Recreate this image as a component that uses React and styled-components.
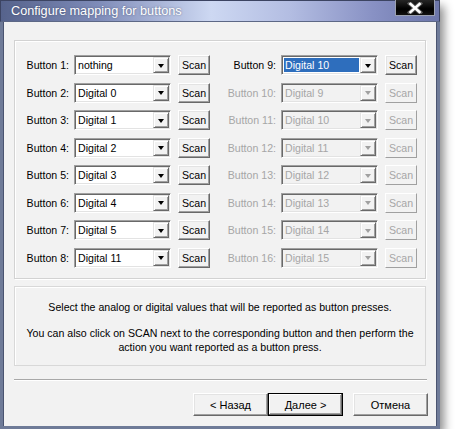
import React from "react";
import styled, { createGlobalStyle, css } from "styled-components";

const GlobalStyle = createGlobalStyle`
  * { box-sizing: border-box; }
  body {
    margin: 0;
    background: #ffffff;
    font-family: "Liberation Sans", Arial, sans-serif;
    font-size: 10.6px;
    color: #000;
  }
`;

const FACE = "#f2f2f2";

const Window = styled.div`
  width: 440px;
  display: flex;
  flex-direction: column;
  box-shadow: 4px 6px 9px rgba(0, 0, 0, 0.45);
`;

const TitleBar = styled.div`
  height: 22px;
  display: flex;
  align-items: flex-start;
  padding: 0 4px 0 10px;
  background: linear-gradient(
    90deg,
    #56638c 0%,
    #7e8bb8 22%,
    #cdd8f2 48%,
    #b3bde2 66%,
    #8891c4 85%,
    #6c76aa 100%
  );
  border-top: 1px solid #3c4462;
  border-left: 1px solid #3c4462;
  border-right: 1px solid #3c4462;
  border-bottom: 1px solid #5d6886;
`;

const Title = styled.span`
  color: #fff;
  font-size: 12.7px;
  line-height: 20px;
  text-shadow: 0 0 2px rgba(40, 50, 80, 0.6);
`;

const CloseButton = styled.div`
  margin-left: auto;
  margin-top: -1px;
  width: 40px;
  height: 16px;
  display: flex;
  align-items: center;
  justify-content: center;
  background: linear-gradient(#262626, #000 60%, #111);
  border: 1px solid #9aa0b0;
  border-top: none;
`;

const Body = styled.div`
  background: ${FACE};
  border: 3px solid #6f7b98;
  border-top: none;
  box-shadow: inset 1px 0 0 #4a5470, inset -1px 0 0 #4a5470;
  padding: 18px 11px 10px 11px;
  display: flex;
  flex-direction: column;
`;

const GroupBox = styled.div`
  height: 239px;
  border: 1px solid #d2d2d2;
  box-shadow: inset 1px 1px 0 #fff, 1px 1px 0 #fff;
  padding: 14px 0 0 0;
  display: grid;
  grid-template-columns: 195px 1fr;
  column-gap: 2px;
  align-content: start;
`;

const Column = styled.div`
  display: flex;
  flex-direction: column;
  gap: 7.5px;
`;

const Row = styled.div`
  display: grid;
  grid-template-columns: ${(p) => p.$labelWidth}px 104px 32px;
  height: 20px;
  align-items: center;
`;

const Label = styled.span`
  text-align: right;
  padding-right: 5px;
  white-space: nowrap;
  color: ${(p) => (p.$disabled ? "#a6a6a6" : "#000")};
`;

const ComboBox = styled.div`
  height: 20px;
  width: 97px;
  display: flex;
  padding: 1px;
  border: 1px solid;
  border-color: #a0a0a0 #ffffff #ffffff #a0a0a0;
  box-shadow: inset 1px 1px 0 #696969, inset -1px -1px 0 #e3e3e3;
  background: ${(p) => (p.$disabled ? FACE : "#fff")};
`;

const ComboText = styled.span`
  flex: 1;
  margin: 1px;
  padding-left: 1px;
  line-height: 14px;
  white-space: nowrap;
  color: ${(p) => (p.$disabled ? "#a6a6a6" : "#000")};
  ${(p) =>
    p.$selected &&
    css`
      background: #2e6ebd;
      color: #fff;
    `}
`;

const ArrowButton = styled.div`
  width: 16px;
  height: 16px;
  display: flex;
  align-items: center;
  justify-content: center;
  background: ${FACE};
  border: 1px solid;
  border-color: #e3e3e3 #696969 #696969 #e3e3e3;
  box-shadow: inset 1px 1px 0 #fff, inset -1px -1px 0 #a0a0a0;
`;

const Triangle = styled.span`
  width: 0;
  height: 0;
  margin-top: 1px;
  border-left: 3.5px solid transparent;
  border-right: 3.5px solid transparent;
  border-top: 4px solid ${(p) => (p.$disabled ? "#a0a0a0" : "#000")};
`;

const raised = css`
  background: ${FACE};
  border: 1px solid;
  border-color: #ffffff #696969 #696969 #ffffff;
  box-shadow: inset -1px -1px 0 #a0a0a0, inset 1px 1px 0 #e3e3e3;
`;

const ScanButton = styled.div`
  ${raised}
  height: 20px;
  display: flex;
  align-items: center;
  justify-content: center;
  color: ${(p) => (p.$disabled ? "#a6a6a6" : "#000")};
  ${(p) =>
    p.$disabled &&
    css`
      border-color: #fff #a0a0a0 #a0a0a0 #fff;
      box-shadow: none;
    `}
`;

const InfoPanel = styled.div`
  margin-top: 7px;
  height: 80px;
  border: 1px solid #d8d8d8;
  box-shadow: inset 1px 1px 0 #fff;
  padding: 13px 10px 0;
  text-align: center;
  line-height: 14px;
`;

const Paragraph = styled.p`
  margin: 0 0 12px;
`;

const Separator = styled.div`
  margin: 13px -1px 0 0;
  height: 2px;
  border-top: 1px solid #a8a8a8;
  border-bottom: 1px solid #fff;
`;

const ButtonRow = styled.div`
  margin: 12px -2px 0 0;
  display: flex;
  justify-content: flex-end;
`;

const DialogButton = styled.div`
  ${raised}
  width: 75px;
  height: 23px;
  display: flex;
  align-items: center;
  justify-content: center;
  margin-left: ${(p) => p.$gap || 0}px;
  font-size: 11px;
  ${(p) =>
    p.$default &&
    css`
      border: 1px solid #000;
      box-shadow: inset -1px -1px 0 #696969, inset 1px 1px 0 #fff,
        inset -2px -2px 0 #a0a0a0;
    `}
`;

const CloseIcon = () => (
  <svg width="16" height="12" viewBox="0 0 16 12">
    <path d="M3 1.5 L13 10.5 M13 1.5 L3 10.5" stroke="#555" strokeWidth="4.4" strokeLinecap="square" />
    <path d="M3.5 2 L12.5 10 M12.5 2 L3.5 10" stroke="#fff" strokeWidth="2.6" strokeLinecap="square" />
  </svg>
);

const left = [
  ["Button 1:", "nothing"],
  ["Button 2:", "Digital 0"],
  ["Button 3:", "Digital 1"],
  ["Button 4:", "Digital 2"],
  ["Button 5:", "Digital 3"],
  ["Button 6:", "Digital 4"],
  ["Button 7:", "Digital 5"],
  ["Button 8:", "Digital 11"],
];

const right = [
  ["Button 9:", "Digital 10"],
  ["Button 10:", "Digital 9"],
  ["Button 11:", "Digital 10"],
  ["Button 12:", "Digital 11"],
  ["Button 13:", "Digital 12"],
  ["Button 14:", "Digital 13"],
  ["Button 15:", "Digital 14"],
  ["Button 16:", "Digital 15"],
];

function MappingRow({ label, value, labelWidth, disabled, selected }) {
  return (
    <Row $labelWidth={labelWidth}>
      <Label $disabled={disabled}>{label}</Label>
      <ComboBox $disabled={disabled}>
        <ComboText $disabled={disabled} $selected={selected}>
          {value}
        </ComboText>
        <ArrowButton>
          <Triangle $disabled={disabled} />
        </ArrowButton>
      </ComboBox>
      <ScanButton $disabled={disabled}>Scan</ScanButton>
    </Row>
  );
}

export default function App() {
  return (
    <>
      <GlobalStyle />
      <Window>
        <TitleBar>
          <Title>Configure mapping for buttons</Title>
          <CloseButton>
            <CloseIcon />
          </CloseButton>
        </TitleBar>
        <Body>
          <GroupBox>
            <Column>
              {left.map(([label, value]) => (
                <MappingRow key={label} label={label} value={value} labelWidth={59} />
              ))}
            </Column>
            <Column>
              {right.map(([label, value], i) => (
                <MappingRow
                  key={label}
                  label={label}
                  value={value}
                  labelWidth={69}
                  disabled={i > 0}
                  selected={i === 0}
                />
              ))}
            </Column>
          </GroupBox>
          <InfoPanel>
            <Paragraph>
              Select the analog or digital values that will be reported as button presses.
            </Paragraph>
            <Paragraph>
              You can also click on SCAN next to the corresponding button and then perform the
              action you want reported as a button press.
            </Paragraph>
          </InfoPanel>
          <Separator />
          <ButtonRow>
            <DialogButton>&lt; Назад</DialogButton>
            <DialogButton $default>Далее &gt;</DialogButton>
            <DialogButton $gap={10}>Отмена</DialogButton>
          </ButtonRow>
        </Body>
      </Window>
    </>
  );
}
